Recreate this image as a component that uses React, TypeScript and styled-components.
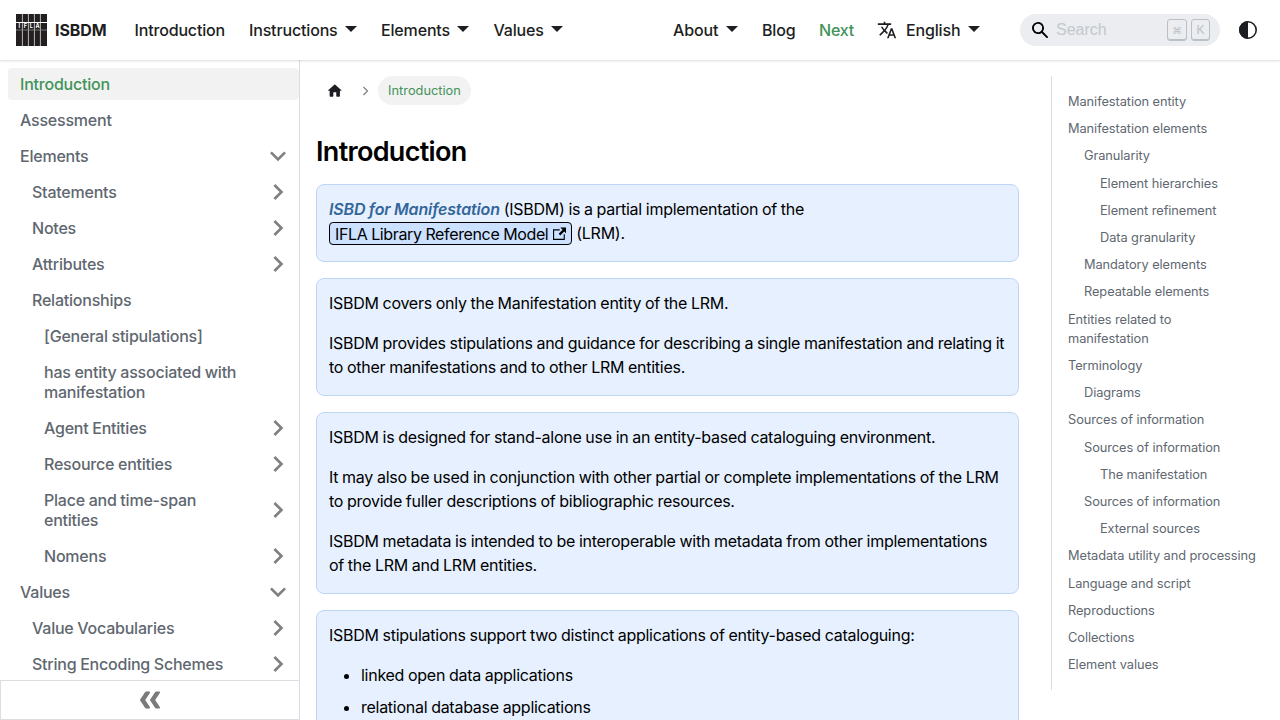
import React from "react";
import styled, { createGlobalStyle } from "styled-components";

const Global = createGlobalStyle`
  *, *::before, *::after { box-sizing: border-box; }
  body {
    margin: 0;
    height: 720px;
    overflow: hidden;
    background: #fff;
    color: #000;
    font: 400 16px/24px Inter, "Liberation Sans", sans-serif;
  }
  p, h1, ul { margin: 0; padding: 0; }
`;

const Page = styled.div`
  height: 720px;
  display: flex;
  flex-direction: column;
`;
const Navbar = styled.header`
  height: 60px;
  flex: none;
  display: flex;
  align-items: center;
  padding: 0 16px;
  background: #fff;
  box-shadow: 0 1px 2px 0 rgba(0, 0, 0, 0.15);
  z-index: 2;
  font-weight: 500;
  letter-spacing: -0.16px;
  color: #1c1e21;
`;
const Brand = styled.div`
  display: flex;
  align-items: center;
  gap: 8px;
  width: 106.5px;
  font-weight: 700;
  letter-spacing: -0.1px;
`;
const NavLink = styled.a<{ $width: number; $active?: boolean }>`
  display: flex;
  align-items: center;
  flex: none;
  width: ${(p) => p.$width}px;
  padding-left: 12px;
  white-space: nowrap;
  color: ${(p) => (p.$active ? "#42935a" : "inherit")};
`;
const Caret = styled.span`
  margin-left: 7.5px;
  border: 6.4px solid transparent;
  border-top-color: currentColor;
  border-bottom-width: 0;
  position: relative;
  top: -1px;
`;
const Spacer = styled.div`
  flex: 1;
`;
const LangIcon = styled.svg`
  margin-right: 9px;
  flex: none;
`;
const Search = styled.div`
  width: 200px;
  height: 32px;
  flex: none;
  display: flex;
  align-items: center;
  gap: 4px;
  padding: 0 10px 0 12px;
  border-radius: 16px;
  background: #ebedf0;
  color: #c3c8ce;
  font-weight: 400;
`;
const SearchLabel = styled.span`
  flex: 1;
  padding-left: 4px;
  font-family: "Liberation Sans", Arial, sans-serif;
  letter-spacing: 0;
`;
const Key = styled.kbd<{ $width: number; $size: number }>`
  width: ${(p) => p.$width}px;
  height: 22px;
  border: 1px solid #b9c0c7;
  border-radius: 3px;
  box-shadow: inset 0 -1px 0 #b9c0c7;
  text-align: center;
  font: ${(p) => p.$size}px/21px "Liberation Sans", "DejaVu Sans", sans-serif;
  letter-spacing: 0;
  color: #b9c0c7;
`;
const ThemeToggle = styled.svg`
  margin: 0 4px 0 16px;
  flex: none;
`;

const Body = styled.div`
  flex: 1;
  min-height: 0;
  display: flex;
`;
const Sidebar = styled.aside`
  width: 300px;
  flex: none;
  display: flex;
  flex-direction: column;
  border-right: 1px solid #dadde1;
`;
const Menu = styled.nav`
  flex: 1;
  min-height: 0;
  overflow: hidden;
  padding: 8px 0 0 8px;
  display: flex;
  flex-direction: column;
  gap: 4px;
`;
const MenuRow = styled.a<{ $level: number; $active?: boolean }>`
  flex: none;
  display: flex;
  align-items: center;
  justify-content: space-between;
  min-height: 32px;
  margin-left: ${(p) => p.$level * 12}px;
  padding: 6px 5px 6px 12px;
  border-radius: 4px;
  line-height: 20px;
  font-weight: 500;
  letter-spacing: -0.22px;
  word-spacing: -0.3px;
  white-space: pre-line;
  color: ${(p) => (p.$active ? "#42935a" : "#606770")};
  background: ${(p) => (p.$active ? "#f2f2f2" : "transparent")};
`;
const Arrow = styled.svg<{ $open?: boolean }>`
  flex: none;
  margin: -6px 0;
  transform: rotate(${(p) => (p.$open ? 180 : 90)}deg);
`;
const Collapse = styled.button`
  height: 40px;
  flex: none;
  display: flex;
  align-items: center;
  justify-content: center;
  border: 1px solid #dadde1;
  border-right: 0;
  background: #fff;
  padding: 0;
`;

const Main = styled.main`
  width: 735px;
  flex: none;
  padding: 16px 16px 0;
  overflow: hidden;
`;
const Breadcrumbs = styled.div`
  display: flex;
  align-items: center;
  height: 29px;
  font-size: 12.8px;
  padding-left: 10px;
`;
const Chevron = styled.svg`
  margin: 0 8px 0 17px;
`;
const Crumb = styled.span`
  height: 29px;
  line-height: 29px;
  padding: 0 10px 0 10.5px;
  border-radius: 15px;
  background: #f2f2f2;
  color: #42935a;
`;
const Title = styled.h1`
  margin: 30px 0 15px;
  font-size: 27px;
  line-height: 34px;
  font-weight: 600;
  letter-spacing: -0.68px;
`;
const Card = styled.section`
  display: flex;
  flex-direction: column;
  gap: 16px;
  margin-bottom: 16px;
  padding: 12px 12px 16px;
  border: 1px solid #bfd5f8;
  border-radius: 8px;
  background: #e6f0ff;
  letter-spacing: -0.27px;
  word-spacing: -0.36px;
  white-space: pre;
`;
const Term = styled.em`
  font-weight: 600;
  letter-spacing: -0.15px;
  color: #336699;
`;
const ExternalLink = styled.a`
  position: relative;
  top: 1px;
  padding: 1px 5px 0;
  border: 1px solid #000;
  border-radius: 4px;
  background: #cce0ff;
  letter-spacing: -0.36px;
  svg { margin-left: 4.5px; }
`;
const Bullets = styled.ul`
  padding-left: 32px;
  white-space: normal;
  li + li { margin-top: 8px; }
`;

const TocColumn = styled.aside`
  flex: 1;
  padding: 16px 8px 0 16px;
`;
const Toc = styled.ul`
  display: flex;
  flex-direction: column;
  gap: 8px;
  padding: 16px 0 16px 16px;
  border-left: 1px solid #dadde1;
  list-style: none;
  font-size: 12.8px;
  line-height: 19.2px;
  letter-spacing: -0.07px;
  color: #606770;
`;
const TocItem = styled.li<{ $level: number }>`
  padding-left: ${(p) => p.$level * 16}px;
  white-space: pre-line;
`;

type Item = [string, number, ("open" | "closed")?];
const menu: Item[] = [
  ["Introduction", 0],
  ["Assessment", 0],
  ["Elements", 0, "open"],
  ["Statements", 1, "closed"],
  ["Notes", 1, "closed"],
  ["Attributes", 1, "closed"],
  ["Relationships", 1],
  ["[General stipulations]", 2],
  ["has entity associated with\nmanifestation", 2],
  ["Agent Entities", 2, "closed"],
  ["Resource entities", 2, "closed"],
  ["Place and time-span\nentities", 2, "closed"],
  ["Nomens", 2, "closed"],
  ["Values", 0, "open"],
  ["Value Vocabularies", 1, "closed"],
  ["String Encoding Schemes", 1, "closed"],
];

const toc: [string, number][] = [
  ["Manifestation entity", 0],
  ["Manifestation elements", 0],
  ["Granularity", 1],
  ["Element hierarchies", 2],
  ["Element refinement", 2],
  ["Data granularity", 2],
  ["Mandatory elements", 1],
  ["Repeatable elements", 1],
  ["Entities related to\nmanifestation", 0],
  ["Terminology", 0],
  ["Diagrams", 1],
  ["Sources of information", 0],
  ["Sources of information", 1],
  ["The manifestation", 2],
  ["Sources of information", 1],
  ["External sources", 2],
  ["Metadata utility and processing", 0],
  ["Language and script", 0],
  ["Reproductions", 0],
  ["Collections", 0],
  ["Element values", 0],
];

const Logo = () => (
  <svg width="31" height="32" viewBox="0 0 31 32">
    <rect width="31" height="32" fill="#231f20" />
    <path d="M6.4 0v32M12.4 0v32M18.4 0v32M24.4 0v32" stroke="#c8c8c8" strokeWidth="0.9" />
    <path d="M0 8.5h31" stroke="#fff" strokeWidth="1" />
    <path d="M0 16h31" stroke="#8a8a8a" strokeWidth="0.8" />
    <g fill="#fff" fontSize="5.5" fontWeight="700" fontFamily="Inter, sans-serif" textAnchor="middle" letterSpacing="0">
      <text x="3.3" y="13.8">I</text>
      <text x="9.4" y="13.8">F</text>
      <text x="15.4" y="13.8">L</text>
      <text x="21.6" y="13.8">A</text>
    </g>
  </svg>
);

const doubleChevron =
  "M9.992 10.023c0 .2-.062.399-.172.547l-4.996 7.492a.982.982 0 01-.828.454H1c-.55 0-1-.453-1-1 0-.2.059-.403.168-.551l4.629-6.942L.168 3.078A.939.939 0 010 2.528c0-.548.45-.997 1-.997h2.996c.352 0 .649.18.828.45L9.82 9.472c.11.148.172.347.172.55z";

export default function App() {
  return (
    <Page>
      <Global />
      <Navbar>
        <Brand>
          <Logo />
          ISBDM
        </Brand>
        <NavLink $width={114.5}>Introduction</NavLink>
        <NavLink $width={132}>Instructions<Caret /></NavLink>
        <NavLink $width={112.5}>Elements<Caret /></NavLink>
        <NavLink $width={94}>Values<Caret /></NavLink>
        <Spacer />
        <NavLink $width={89}>About<Caret /></NavLink>
        <NavLink $width={57}>Blog</NavLink>
        <NavLink $width={58} $active>Next</NavLink>
        <NavLink $width={155}>
          <LangIcon width="20" height="20" viewBox="0 0 24 24" fill="currentColor">
            <path d="M12.87 15.07l-2.54-2.51.03-.03c1.74-1.94 2.98-4.17 3.71-6.53H17V4h-7V2H8v2H1v1.99h11.17C11.5 7.92 10.44 9.75 9 11.35 8.07 10.32 7.3 9.19 6.69 8h-2c.73 1.63 1.73 3.17 2.98 4.56l-5.09 5.02L4 19l5-5 3.11 3.11.76-2.04zM18.5 10h-2L12 22h2l1.12-3h4.75L21 22h2l-4.5-12zm-2.62 7l1.62-4.33L19.12 17h-3.24z" />
          </LangIcon>
          English<Caret />
        </NavLink>
        <Search>
          <svg width="16" height="16" viewBox="0 0 16 16" fill="#000">
            <path d="M6.02945,10.20327a4.17382,4.17382,0,1,1,4.17382-4.17382A4.15609,4.15609,0,0,1,6.02945,10.20327Zm9.69195,4.2199L10.8989,9.59979A5.88021,5.88021,0,0,0,12.058,6.02856,6.00467,6.00467,0,1,0,9.59979,10.8989l4.82338,4.82338a.89729.89729,0,0,0,1.29912,0,.89749.89749,0,0,0-.00087-1.29909Z" />
          </svg>
          <SearchLabel>Search</SearchLabel>
          <Key $width={20} $size={9.5}>⌘</Key>
          <Key $width={19} $size={12}>K</Key>
        </Search>
        <ThemeToggle width="24" height="24" viewBox="0 0 24 24">
          <circle cx="12" cy="12" r="8.2" fill="none" stroke="#1c1e21" strokeWidth="1.6" />
          <path d="M12 3a9 9 0 0 0 0 18z" fill="#1c1e21" />
        </ThemeToggle>
      </Navbar>
      <Body>
        <Sidebar>
          <Menu>
            {menu.map(([label, level, state], i) => (
              <MenuRow key={label} $level={level} $active={i === 0}>
                {label}
                {state && (
                  <Arrow $open={state === "open"} width="32" height="32" viewBox="0 0 24 24" fill="#808080">
                    <path d="M7.41 15.41L12 10.83l4.59 4.58L18 14l-6-6-6 6z" />
                  </Arrow>
                )}
              </MenuRow>
            ))}
          </Menu>
          <Collapse>
            <svg width="20" height="20" viewBox="0 0 20 20" fill="#7a7a7a">
              <g transform="rotate(180 10 10)">
                <path d={doubleChevron} />
                <path d={doubleChevron} transform="translate(9.99 0)" />
              </g>
            </svg>
          </Collapse>
        </Sidebar>
        <Main>
          <Breadcrumbs>
            <svg width="17.6" height="17.6" viewBox="0 0 24 24" fill="#1c1e21">
              <path d="M10 19v-5h4v5c0 .55.45 1 1 1h3c.55 0 1-.45 1-1v-7h1.7c.46 0 .68-.57.33-.87L12.67 3.6c-.38-.34-.96-.34-1.34 0l-8.36 7.53c-.34.3-.13.87.33.87H5v7c0 .55.45 1 1 1h3c.55 0 1-.45 1-1z" />
            </svg>
            <Chevron width="9" height="10" viewBox="0 0 9 10" fill="none" stroke="#7f7f7f" strokeWidth="1.2">
              <path d="M2.5 1l4 4-4 4" />
            </Chevron>
            <Crumb>Introduction</Crumb>
          </Breadcrumbs>
          <Title>Introduction</Title>
          <Card>
            <p>
              <Term>ISBD for Manifestation</Term> (ISBDM) is a partial implementation of the{"\n"}
              <ExternalLink>
                IFLA Library Reference Model
                <svg width="13.5" height="13.5" viewBox="0 0 24 24">
                  <path d="M21 13v10h-21v-19h12v2h-10v15h17v-8h2zm3-12h-10.988l4.035 4-6.977 7.07 2.828 2.828 6.977-7.07 4.125 4.172v-11z" />
                </svg>
              </ExternalLink>{" "}
              (LRM).
            </p>
          </Card>
          <Card>
            <p>ISBDM covers only the Manifestation entity of the LRM.</p>
            <p>{"ISBDM provides stipulations and guidance for describing a single manifestation and relating it\nto other manifestations and to other LRM entities."}</p>
          </Card>
          <Card>
            <p>ISBDM is designed for stand-alone use in an entity-based cataloguing environment.</p>
            <p>{"It may also be used in conjunction with other partial or complete implementations of the LRM\nto provide fuller descriptions of bibliographic resources."}</p>
            <p>{"ISBDM metadata is intended to be interoperable with metadata from other implementations\nof the LRM and LRM entities."}</p>
          </Card>
          <Card>
            <p>ISBDM stipulations support two distinct applications of entity-based cataloguing:</p>
            <Bullets>
              <li>linked open data applications</li>
              <li>relational database applications</li>
            </Bullets>
          </Card>
        </Main>
        <TocColumn>
          <Toc>
            {toc.map(([label, level], i) => (
              <TocItem key={i} $level={level}>{label}</TocItem>
            ))}
          </Toc>
        </TocColumn>
      </Body>
    </Page>
  );
}
